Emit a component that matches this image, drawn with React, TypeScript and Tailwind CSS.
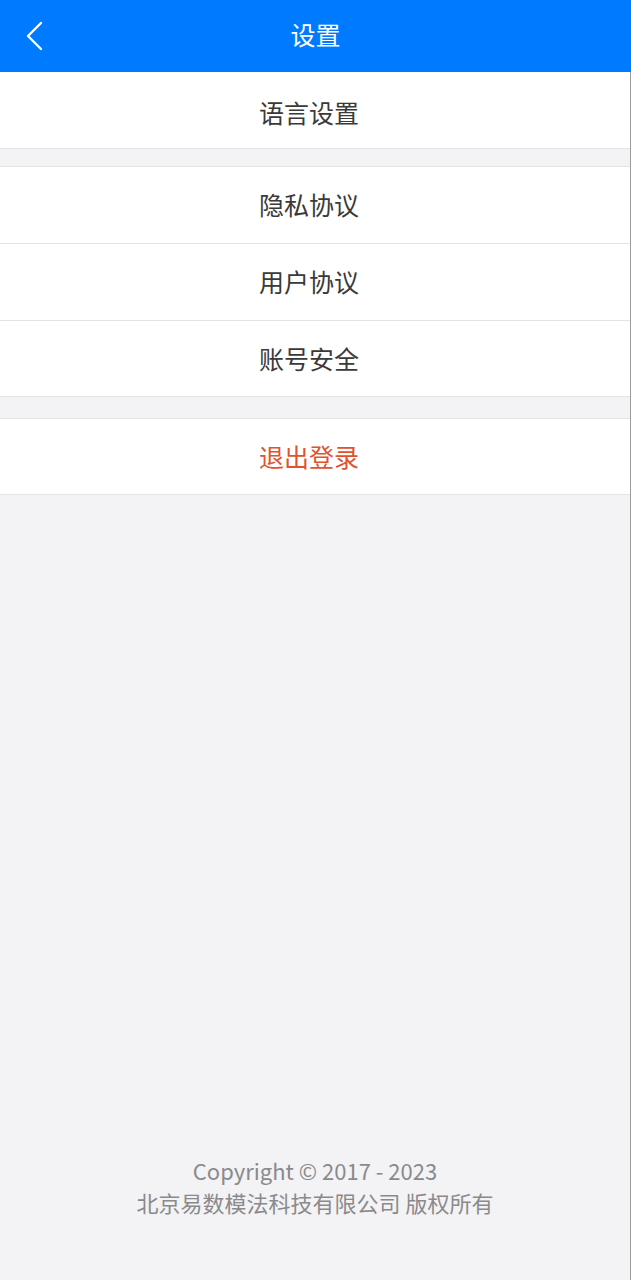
const font = {
  fontFamily: '"Noto Sans CJK SC", "Noto Sans", sans-serif',
};

function Row({ label, danger, last }: { label: string; danger?: boolean; last?: boolean }) {
  return (
    <div
      className={`h-[77px] bg-white flex items-center justify-center pr-[12px] text-[25px] ${
        danger ? "text-[#e0532f]" : "text-[#3a3a3a]"
      } ${last ? "" : "border-b border-[#e4e4e6]"}`}
    >
      {label}
    </div>
  );
}

export default function App() {
  return (
    <div className="w-[631px] h-[1280px] flex flex-col bg-[#f3f2f5]" style={font}>
      {/* Header */}
      <div className="h-[72px] bg-[#007aff] relative flex items-center justify-center shrink-0">
        <svg
          className="absolute left-[24px] top-[21px]"
          width="20"
          height="30"
          viewBox="0 0 20 30"
          fill="none"
          stroke="white"
          strokeWidth="2.4"
          strokeLinecap="round"
          strokeLinejoin="round"
        >
          <path d="M17 2 L4 15 L17 28" />
        </svg>
        <span className="text-white text-[25px] pb-[2px]">设置</span>
      </div>

      {/* Body */}
      <div className="flex-1 flex flex-col border-r border-[#9c9c9e]">
        <div className="h-[77px] bg-white flex items-center justify-center pr-[12px] pt-[5px] text-[25px] text-[#3a3a3a] border-b border-[#e4e4e6]">
          语言设置
        </div>
        <div className="h-[17px]" />
        <div className="border-y border-[#e4e4e6]">
          <Row label="隐私协议" />
          <Row label="用户协议" />
          <div className="h-[75px] bg-white flex items-center justify-center pr-[12px] pt-[1px] text-[25px] text-[#3a3a3a]">
            账号安全
          </div>
        </div>
        <div className="h-[21px]" />
        <div className="border-y border-[#e4e4e6]">
          <div className="h-[75px] bg-white flex items-center justify-center pr-[12px] text-[25px] text-[#e0532f]">
            退出登录
          </div>
        </div>

        <div className="flex-1" />

        {/* Footer */}
        <div className="flex flex-col items-center text-[22px] leading-[32px] text-[#8a8a8c] pb-[62px]">
          <span>Copyright © 2017 - 2023</span>
          <span>北京易数模法科技有限公司 版权所有</span>
        </div>
      </div>
    </div>
  );
}
